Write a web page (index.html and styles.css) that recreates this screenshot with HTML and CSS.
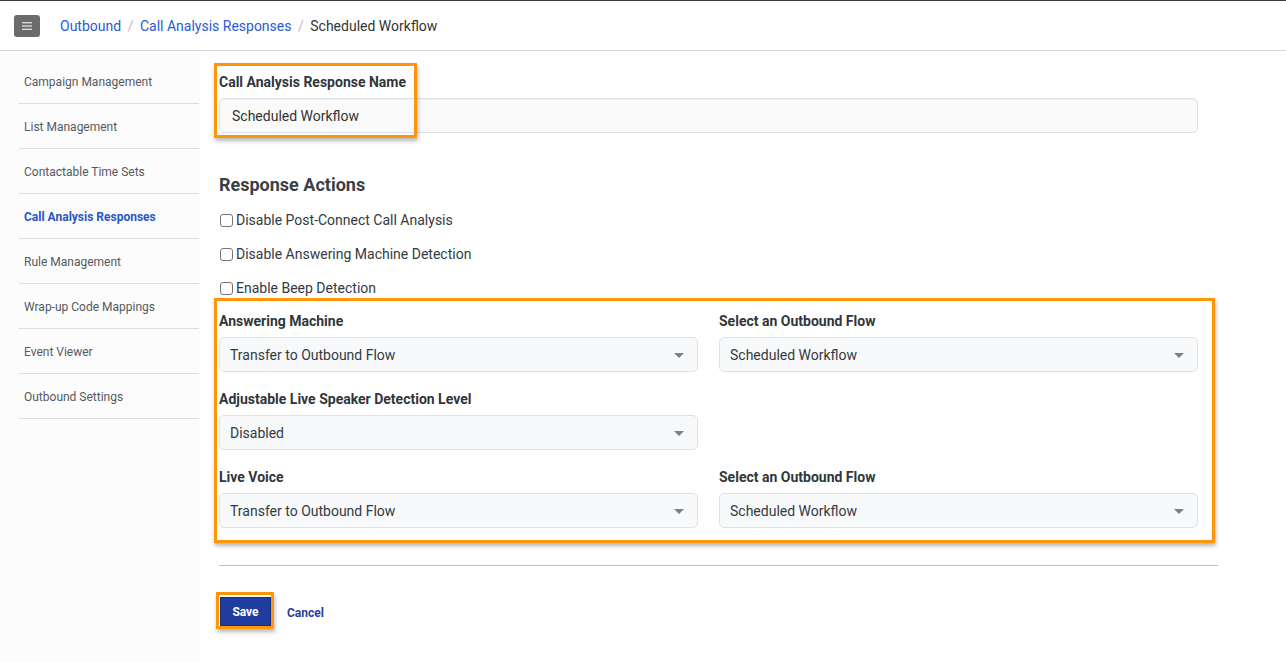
FILE: index.html
```html
<!DOCTYPE html>
<html lang="en">
<head>
<meta charset="utf-8">
<title>Scheduled Workflow</title>
<link rel="stylesheet" href="styles.css">
</head>
<body>
<header class="topbar">
  <button class="menu-btn" type="button" aria-label="Menu">
    <svg width="10" height="8" viewBox="0 0 10 8"><rect x="0" y="0" width="10" height="1.4" fill="#d8d8d8"/><rect x="0" y="3.3" width="10" height="1.4" fill="#d8d8d8"/><rect x="0" y="6.6" width="10" height="1.4" fill="#d8d8d8"/></svg>
  </button>
  <nav class="crumbs">
    <a class="crumb-link" href="#">Outbound</a>
    <span class="crumb-sep">/</span>
    <a class="crumb-link" href="#">Call Analysis Responses</a>
    <span class="crumb-sep">/</span>
    <span class="crumb-current">Scheduled Workflow</span>
  </nav>
</header>
<div class="layout">
  <aside class="sidebar">
    <ul class="side-list">
      <li class="side-item">Campaign Management</li>
      <li class="side-item">List Management</li>
      <li class="side-item">Contactable Time Sets</li>
      <li class="side-item active">Call Analysis Responses</li>
      <li class="side-item">Rule Management</li>
      <li class="side-item">Wrap-up Code Mappings</li>
      <li class="side-item">Event Viewer</li>
      <li class="side-item">Outbound Settings</li>
    </ul>
  </aside>
  <main class="main">
    <div class="form">
      <label class="field-label">Call Analysis Response Name</label>
      <div class="text-input">Scheduled Workflow</div>

      <h2 class="section-title">Response Actions</h2>
      <label class="check-row"><span class="checkbox"></span>Disable Post-Connect Call Analysis</label>
      <label class="check-row"><span class="checkbox"></span>Disable Answering Machine Detection</label>
      <label class="check-row"><span class="checkbox"></span>Enable Beep Detection</label>

      <div class="grid">
        <div class="field">
          <div class="field-label">Answering Machine</div>
          <div class="select"><span>Transfer to Outbound Flow</span><span class="caret"></span></div>
        </div>
        <div class="field">
          <div class="field-label">Select an Outbound Flow</div>
          <div class="select"><span>Scheduled Workflow</span><span class="caret"></span></div>
        </div>
        <div class="field">
          <div class="field-label">Adjustable Live Speaker Detection Level</div>
          <div class="select"><span>Disabled</span><span class="caret"></span></div>
        </div>
        <div class="field"></div>
        <div class="field">
          <div class="field-label">Live Voice</div>
          <div class="select"><span>Transfer to Outbound Flow</span><span class="caret"></span></div>
        </div>
        <div class="field">
          <div class="field-label">Select an Outbound Flow</div>
          <div class="select"><span>Scheduled Workflow</span><span class="caret"></span></div>
        </div>
      </div>
    </div>
    <hr class="divider">
    <div class="actions">
      <button class="btn-save" type="button">Save</button>
      <a class="btn-cancel" href="#">Cancel</a>
    </div>

    <div class="highlight hl-name"></div>
    <div class="highlight hl-grid"></div>
    <div class="highlight hl-save"></div>
  </main>
</div>
</body>
</html>
```
FILE: styles.css
```css
* { box-sizing: border-box; }
html, body { margin: 0; padding: 0; }
body {
  font-family: Roboto, "Liberation Sans", Arial, sans-serif;
  color: #333a40;
  background: #ffffff;
  width: 1286px;
  height: 662px;
  overflow: hidden;
}

.topbar {
  height: 51px;
  border-top: 1px solid #3a3a3a;
  border-bottom: 1px solid #d4d4d4;
  display: flex;
  align-items: center;
  padding-left: 14px;
}
.menu-btn {
  width: 26px;
  height: 22px;
  margin-top: 1px;
  border: none;
  border-radius: 3px;
  background: #6b6b6b;
  display: flex;
  align-items: center;
  justify-content: center;
  padding: 0;
}
.crumbs {
  margin-left: 20px;
  font-size: 14px;
  display: flex;
  align-items: center;
  gap: 6.5px;
  margin-top: 1px;
}
.crumb-link { color: #2a5bd2; text-decoration: none; }
.crumb-sep { color: #bdbdbd; }
.crumb-current { color: #333333; }

.layout { display: flex; height: 611px; }
.sidebar {
  width: 200px;
  flex: none;
  background: #fcfcfc;
  padding: 8px 1px 0 19px;
}
.side-list { list-style: none; margin: 0; padding: 0; }
.side-item {
  font-size: 12px;
  line-height: 14px;
  color: #555a60;
  padding: 16px 0 14px 5px;
  border-bottom: 1px solid #dcdcdc;
}
.side-item.active { color: #2856c4; font-weight: 700; }

.main {
  position: relative;
  flex: 1;
  padding: 23px 0 0 19px;
}
.form { width: 979px; }
.field-label {
  display: block;
  font-size: 14px;
  line-height: 17px;
  font-weight: 700;
  color: #30363c;
  margin-bottom: 7px;
}
.text-input {
  height: 35px;
  border: 1px solid #dde1e6;
  border-radius: 5px;
  background: #fafafa;
  box-shadow: inset 0 1px 2px rgba(0,0,0,0.04);
  font-size: 14px;
  line-height: 33px;
  padding: 1px 0 0 12px;
  color: #333;
}
.section-title {
  margin: 41px 0 14px;
  font-size: 18px;
  line-height: 22px;
  font-weight: 700;
  color: #3a3f45;
}
.check-row {
  display: flex;
  align-items: center;
  font-size: 14px;
  line-height: 20px;
  color: #333a40;
  margin-bottom: 14px;
}
.checkbox {
  width: 13px;
  height: 13px;
  border: 1px solid #767676;
  border-radius: 3px;
  background: #fff;
  margin: 0 3px 0 1px;
  flex: none;
}
.grid {
  display: grid;
  grid-template-columns: 479px 479px;
  column-gap: 21px;
  row-gap: 19px;
  margin-top: 15px;
}
.select {
  height: 35px;
  border: 1px solid #dde2e8;
  border-radius: 5px;
  background: #f8f9fb;
  display: flex;
  align-items: center;
  justify-content: space-between;
  padding: 0 13px 0 10px;
  font-size: 14px;
  color: #333a40;
}
.caret {
  width: 0;
  height: 0;
  border-left: 5px solid transparent;
  border-right: 5px solid transparent;
  border-top: 5px solid #808080;
  margin-top: 1px;
}
.divider {
  width: 999px;
  margin: 37px 0 0;
  border: none;
  border-top: 1px solid #bdbdbd;
}
.actions {
  display: flex;
  align-items: center;
  margin-top: 31px;
  padding-left: 1px;
  gap: 16px;
}
.btn-save {
  width: 51px;
  height: 29px;
  border: 1px solid #15307c;
  background: #203c9e;
  color: #fff;
  font-family: Roboto, "Liberation Sans", Arial, sans-serif;
  font-weight: 700;
  font-size: 12px;
  padding: 0;
}
.btn-cancel {
  color: #2a3f9c;
  font-weight: 700;
  font-size: 12px;
  text-decoration: none;
  margin-top: 2px;
}

.highlight {
  position: absolute;
  border: 3px solid #ff9607;
  box-shadow: 1px 3px 4px rgba(0,0,0,0.28);
  pointer-events: none;
}
.hl-name { left: 14px; top: 12px; width: 203px; height: 75px; }
.hl-grid { left: 14px; top: 247px; width: 1001px; height: 245px; }
.hl-save { left: 16px; top: 541px; width: 58px; height: 37px; }
```
